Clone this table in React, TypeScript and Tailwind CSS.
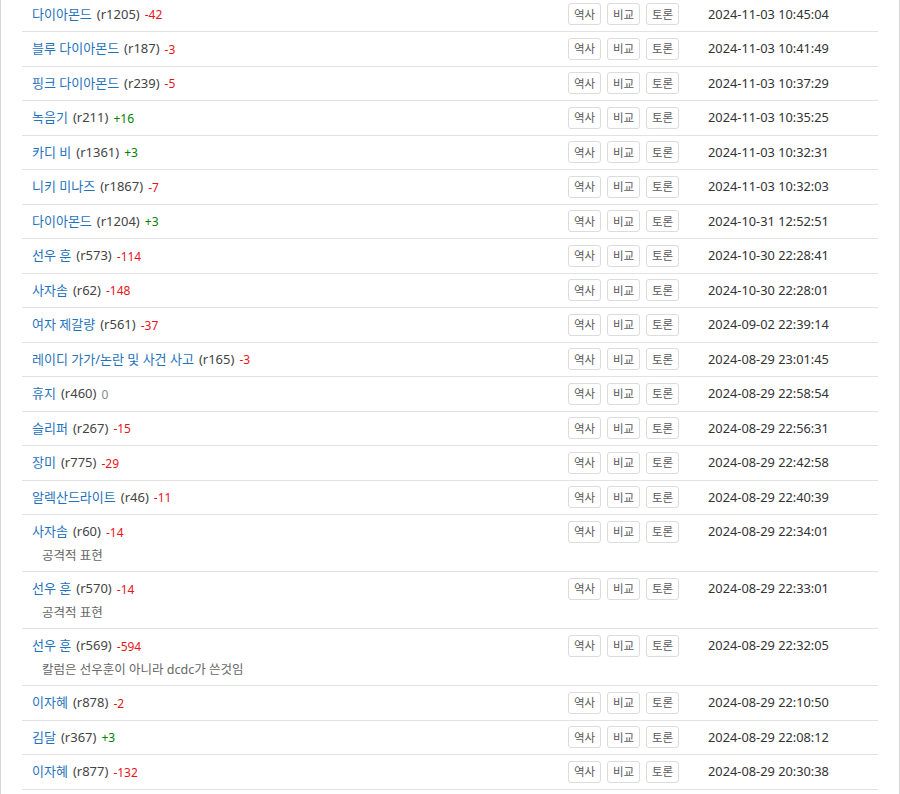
import React from 'react';

interface Row {
  title: string;
  rev: number;
  diff: number;
  date: string;
  log?: string;
}

const ROWS: Row[] = [
  { title: '다이아몬드', rev: 1205, diff: -42, date: '2024-11-03 10:45:04' },
  { title: '블루 다이아몬드', rev: 187, diff: -3, date: '2024-11-03 10:41:49' },
  { title: '핑크 다이아몬드', rev: 239, diff: -5, date: '2024-11-03 10:37:29' },
  { title: '녹음기', rev: 211, diff: 16, date: '2024-11-03 10:35:25' },
  { title: '카디 비', rev: 1361, diff: 3, date: '2024-11-03 10:32:31' },
  { title: '니키 미나즈', rev: 1867, diff: -7, date: '2024-11-03 10:32:03' },
  { title: '다이아몬드', rev: 1204, diff: 3, date: '2024-10-31 12:52:51' },
  { title: '선우 훈', rev: 573, diff: -114, date: '2024-10-30 22:28:41' },
  { title: '사자솜', rev: 62, diff: -148, date: '2024-10-30 22:28:01' },
  { title: '여자 제갈량', rev: 561, diff: -37, date: '2024-09-02 22:39:14' },
  { title: '레이디 가가/논란 및 사건 사고', rev: 165, diff: -3, date: '2024-08-29 23:01:45' },
  { title: '휴지', rev: 460, diff: 0, date: '2024-08-29 22:58:54' },
  { title: '슬리퍼', rev: 267, diff: -15, date: '2024-08-29 22:56:31' },
  { title: '장미', rev: 775, diff: -29, date: '2024-08-29 22:42:58' },
  { title: '알렉산드라이트', rev: 46, diff: -11, date: '2024-08-29 22:40:39' },
  { title: '사자솜', rev: 60, diff: -14, date: '2024-08-29 22:34:01', log: '공격적 표현' },
  { title: '선우 훈', rev: 570, diff: -14, date: '2024-08-29 22:33:01', log: '공격적 표현' },
  { title: '선우 훈', rev: 569, diff: -594, date: '2024-08-29 22:32:05', log: '칼럼은 선우훈이 아니라 dcdc가 쓴것임' },
  { title: '이자혜', rev: 878, diff: -2, date: '2024-08-29 22:10:50' },
  { title: '김달', rev: 367, diff: 3, date: '2024-08-29 22:08:12' },
  { title: '이자혜', rev: 877, diff: -132, date: '2024-08-29 20:30:38' },
];

const Diff: React.FC<{ n: number }> = ({ n }) => {
  if (n > 0) return <span className="text-[12px] text-[#008000] relative top-[1px]">+{n}</span>;
  if (n < 0) return <span className="text-[12px] text-[#e8141b] relative top-[1px]">{n}</span>;
  return <span className="text-[12px] text-[#888] relative top-[1px]">0</span>;
};

const Btn: React.FC<{ label: string }> = ({ label }) => (
  <button className="w-[33px] h-[22px] flex items-center justify-center rounded-[3px] border border-[#dcdcdc] bg-white text-[11.5px] text-[#5a5a5a]">
    {label}
  </button>
);

export default function App() {
  return (
    <div
      className="w-[900px] h-[794px] overflow-hidden bg-white border-x border-[#d5d5d5] px-[21px]"
      style={{ fontFamily: '"Noto Sans", "Noto Sans CJK KR", sans-serif' }}
    >
      <ul className="-mt-[2.5px]">
        {ROWS.map((r, i) => (
          <li key={i} className="border-b border-[#e2e2e2] pl-[10px]">
            <div className="h-[33.5px] flex items-center">
              <div className="flex-1 flex items-center gap-[5px] text-[13px] whitespace-nowrap">
                <a className="text-[#1f73bd]">{r.title}</a>
                <span className="text-[#444]">(r{r.rev})</span>
                <Diff n={r.diff} />
              </div>
              <div className="w-[310px] flex items-center shrink-0">
                <div className="flex gap-[6px]">
                  <Btn label="역사" />
                  <Btn label="비교" />
                  <Btn label="토론" />
                </div>
                <span className="ml-[29px] text-[12.8px] text-[#333] whitespace-nowrap">{r.date}</span>
              </div>
            </div>
            {r.log && (
              <div className="-mt-[2px] pb-[6.5px] pl-[10px] text-[12.5px] leading-[18px] text-[#666]">
                {r.log}
              </div>
            )}
          </li>
        ))}
      </ul>
    </div>
  );
}
